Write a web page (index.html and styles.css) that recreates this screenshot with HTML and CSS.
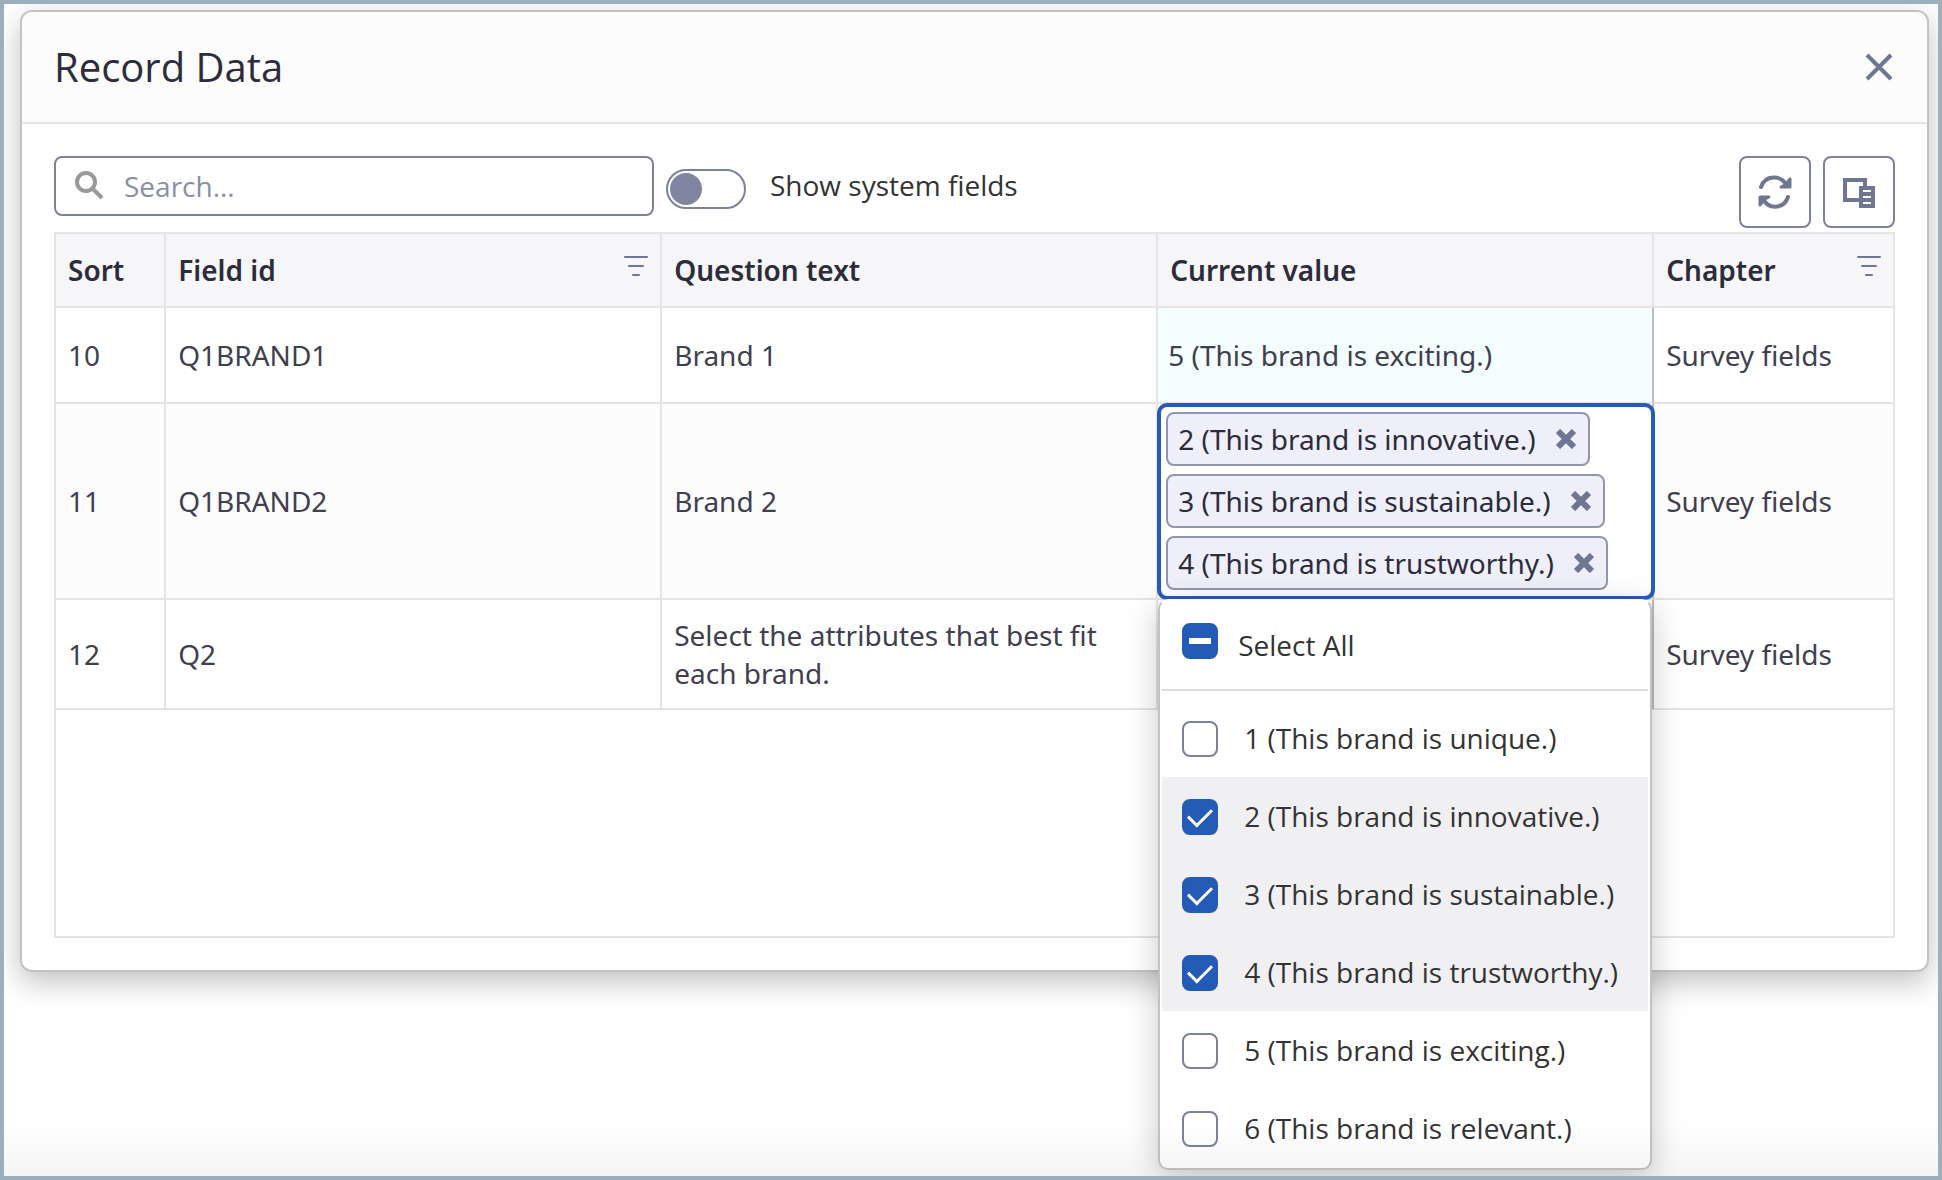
FILE: index.html
```html
<!DOCTYPE html>
<html lang="en">
<head>
  <meta charset="UTF-8">
  <meta name="viewport" content="width=device-width, initial-scale=1.0">
  <title>Record Data</title>
  <link rel="stylesheet" href="styles.css">
</head>
<body>

  <div class="dialog" role="dialog" aria-labelledby="dialogTitle">
    <!-- Header -->
    <div class="dialog-header">
      <h1 class="dialog-title" id="dialogTitle">Record Data</h1>
      <button class="close-btn" aria-label="Close">
        <svg width="28" height="28" viewBox="0 0 28 28"><path d="M2 2L26 26M26 2L2 26" stroke="#6f7691" stroke-width="4" fill="none"/></svg>
      </button>
    </div>

    <div class="dialog-body">
      <!-- Toolbar -->
      <div class="toolbar">
        <div class="search-box">
          <svg width="30" height="30" viewBox="0 0 30 30" fill="none" stroke="#999"><circle cx="12" cy="11" r="9" stroke-width="4"/><path d="M18 17L28 27" stroke-width="4"/></svg>
          <input class="search-input" type="text" placeholder="Search..." aria-label="Search">
        </div>
        <input class="toggle" type="checkbox" role="switch" id="systemFields">
        <label class="toggle-label" for="systemFields">Show system fields</label>
        <div class="toolbar-buttons">
          <button class="icon-btn" aria-label="Refresh">
            <svg width="36" height="36" viewBox="0 0 36 36" fill="none" stroke="#6f7691" stroke-width="4" stroke-linecap="round">
              <path d="M4 13C8 1 24 0 30 12"/>
              <path d="M31 23C27 35 12 36 6 25"/>
              <path d="M33 5V13H24L28 11Z" fill="#6f7691" stroke-width="3" stroke-linejoin="round"/>
              <path d="M3 31V23H12L8 25Z" fill="#6f7691" stroke-width="3" stroke-linejoin="round"/>
            </svg>
          </button>
          <button class="icon-btn" aria-label="Choose columns">
            <svg width="34" height="34" viewBox="0 0 34 34">
              <path d="M3 5H23V25H3Z" fill="none" stroke="#6f7691" stroke-width="4"/>
              <path d="M17 11H33V33H17Z" fill="#6f7691"/>
              <path d="M21 16H29M21 22H29M21 28H29" stroke="#fff" stroke-width="2"/>
            </svg>
          </button>
        </div>
      </div>

      <!-- Grid -->
      <div class="grid">
        <table class="grid-table">
          <colgroup>
            <col class="col-sort">
            <col class="col-wide">
            <col class="col-wide">
            <col class="col-wide">
            <col>
          </colgroup>
          <thead>
            <tr>
              <th>Sort</th>
              <th>
                <div class="head-cell">
                  <span>Field id</span>
                  <button class="filter-btn" aria-label="Filter Field id">
                    <svg width="24" height="22" viewBox="0 0 24 22"><path d="M1 2H23M5 11H19M9 20H15" stroke="#6f7691" stroke-width="2" stroke-linecap="round"/></svg>
                  </button>
                </div>
              </th>
              <th>Question text</th>
              <th>Current value</th>
              <th>
                <div class="head-cell">
                  <span>Chapter</span>
                  <button class="filter-btn" aria-label="Filter Chapter">
                    <svg width="24" height="22" viewBox="0 0 24 22"><path d="M1 2H23M5 11H19M9 20H15" stroke="#6f7691" stroke-width="2" stroke-linecap="round"/></svg>
                  </button>
                </div>
              </th>
            </tr>
          </thead>
          <tbody>
            <tr>
              <td>10</td>
              <td>Q1BRAND1</td>
              <td>Brand 1</td>
              <td class="value edited">5 (This brand is exciting.)</td>
              <td>Survey fields</td>
            </tr>
            <tr class="alt">
              <td>11</td>
              <td>Q1BRAND2</td>
              <td>Brand 2</td>
              <td class="value editing">
                <div class="multiselect">
                  <div class="chip">
                    <span>2 (This brand is innovative.)</span>
                    <button class="chip-remove" aria-label="Remove 2"><svg width="20" height="20" viewBox="0 0 20 20"><path d="M2 2L18 18M18 2L2 18" stroke="#6f7691" stroke-width="6"/></svg></button>
                  </div>
                  <div class="chip">
                    <span>3 (This brand is sustainable.)</span>
                    <button class="chip-remove" aria-label="Remove 3"><svg width="20" height="20" viewBox="0 0 20 20"><path d="M2 2L18 18M18 2L2 18" stroke="#6f7691" stroke-width="6"/></svg></button>
                  </div>
                  <div class="chip">
                    <span>4 (This brand is trustworthy.)</span>
                    <button class="chip-remove" aria-label="Remove 4"><svg width="20" height="20" viewBox="0 0 20 20"><path d="M2 2L18 18M18 2L2 18" stroke="#6f7691" stroke-width="6"/></svg></button>
                  </div>

                  <!-- Dropdown -->
                  <div class="dropdown">
                    <label class="select-all"><input class="check" type="checkbox" id="selectAll">Select All</label>
                    <div class="options">
                      <label class="option"><input class="check" type="checkbox">1 (This brand is unique.)</label>
                      <label class="option selected"><input class="check" type="checkbox" checked>2 (This brand is innovative.)</label>
                      <label class="option selected"><input class="check" type="checkbox" checked>3 (This brand is sustainable.)</label>
                      <label class="option selected"><input class="check" type="checkbox" checked>4 (This brand is trustworthy.)</label>
                      <label class="option"><input class="check" type="checkbox">5 (This brand is exciting.)</label>
                      <label class="option"><input class="check" type="checkbox">6 (This brand is relevant.)</label>
                    </div>
                  </div>
                </div>
              </td>
              <td>Survey fields</td>
            </tr>
            <tr>
              <td>12</td>
              <td>Q2</td>
              <td>Select the attributes that best fit each brand.</td>
              <td class="value"></td>
              <td>Survey fields</td>
            </tr>
          </tbody>
        </table>
      </div>
    </div>
  </div>

  <script>
    const selectAll = document.getElementById("selectAll");
    const options = [...document.querySelectorAll(".option .check")];

    // Sync the Select All box with the options
    function updateSelectAll() {
      const count = options.filter(o => o.checked).length;
      selectAll.checked = count === options.length;
      selectAll.indeterminate = count > 0 && count < options.length;
    }
    updateSelectAll();

    options.forEach(option => {
      option.addEventListener("change", () => {
        option.parentElement.classList.toggle("selected", option.checked);
        updateSelectAll();
      });
    });
  </script>

</body>
</html>
```
FILE: styles.css
```css
* {
  box-sizing: border-box;
}
body {
  font-family: "Open Sans", "Noto Sans", sans-serif;
  font-size: 28px;
  line-height: 38px;
  color: #333;
  background-color: #fff;
  margin: 0;
  min-height: 100vh;
  border: 4px solid #9ab1bd;
  padding: 6px 9px 0 16px;
  position: relative;
  overflow: hidden;
}
/* Fade along the bottom edge */
body::after {
  content: "";
  position: absolute;
  left: 0;
  right: 0;
  bottom: 0;
  height: 56px;
  background: linear-gradient(rgba(0, 0, 0, 0), rgba(0, 0, 0, 0.04));
  z-index: 20;
  pointer-events: none;
}
button {
  display: flex;
  align-items: center;
  justify-content: center;
  padding: 0;
  border: none;
  background: none;
  cursor: pointer;
}
input {
  font: inherit;
  margin: 0;
}
/* Dialog */
.dialog {
  border: 2px solid #c2c2c4;
  border-radius: 12px;
  background-color: #fff;
  box-shadow: 0 10px 30px rgba(0, 0, 0, 0.25);
}
.dialog-header {
  display: flex;
  align-items: center;
  justify-content: space-between;
  padding: 27px 32px;
  background-color: #fcfcfc;
  border-bottom: 2px solid #e4e4e6;
  border-radius: 10px 10px 0 0;
}
.dialog-title {
  margin: 0;
  font-size: 40px;
  line-height: 56px;
  font-weight: 400;
  color: #2c2c3a;
}
.close-btn {
  width: 32px;
  height: 32px;
}
.dialog-body {
  padding: 32px;
}
/* Toolbar */
.toolbar {
  display: flex;
  align-items: flex-start;
  margin-bottom: 4px;
}
.search-box {
  display: flex;
  align-items: center;
  gap: 20px;
  width: 600px;
  height: 60px;
  padding: 0 18px;
  border: 2px solid #7c819c;
  border-radius: 8px;
}
.search-input {
  flex: 1;
  min-width: 0;
  padding: 0;
  border: none;
  outline: none;
  background: none;
  color: #333;
}
.search-input::placeholder {
  color: #8a8ea6;
  opacity: 1;
}
.toggle {
  appearance: none;
  width: 80px;
  height: 40px;
  margin: 13px 24px 0 12px;
  padding: 2px;
  border: 2px solid #7c819c;
  border-radius: 20px;
  cursor: pointer;
}
.toggle::before {
  content: "";
  display: block;
  width: 32px;
  height: 32px;
  border-radius: 50%;
  background-color: #7f85a0;
}
.toggle:checked::before {
  margin-left: auto;
}
.toggle-label {
  padding-top: 10px;
}
.toolbar-buttons {
  display: flex;
  gap: 12px;
  margin-left: auto;
}
.icon-btn {
  width: 72px;
  height: 72px;
  border: 2px solid #7c819c;
  border-radius: 8px;
}
/* Grid */
.grid {
  min-height: 706px;
  border: 2px solid #e4e4e6;
}
.grid-table {
  width: 100%;
  font-family: "Noto Sans", "Open Sans", sans-serif;
  table-layout: fixed;
  border-collapse: separate;
  border-spacing: 0;
}
.col-sort {
  width: 6%;
}
.col-wide {
  width: 27%;
}
.grid-table th,
.grid-table td {
  padding: 16px 12px;
  text-align: left;
  border-right: 2px solid #e4e4e6;
  border-bottom: 2px solid #e4e4e6;
}
.grid-table th {
  height: 74px;
  font-weight: 600;
  color: #2c2c3a;
  background-color: #f6f6f9;
}
.grid-table td {
  height: 96px;
  color: #3f3f50;
}
.grid-table th:last-child,
.grid-table td:last-child {
  border-right: none;
}
.grid-table .alt td {
  background-color: #fcfcfc;
}
.grid-table td.value {
  border-right-color: #bcbcbe;
}
.grid-table td.edited {
  padding-left: 10px;
  background-color: #f4fdff;
}
.grid-table td.editing {
  padding: 0;
}
.head-cell {
  display: flex;
  justify-content: space-between;
}
.filter-btn {
  width: 24px;
  height: 30px;
}
/* Multiselect editor */
.multiselect {
  position: relative;
  display: flex;
  flex-direction: column;
  align-items: flex-start;
  gap: 8px;
  margin: -1px -3px -2px -1px;
  padding: 5px 5px 6px;
  border: 4px solid #265cb3;
  border-radius: 10px;
  background-color: #fff;
}
.chip {
  display: flex;
  align-items: center;
  gap: 20px;
  height: 54px;
  padding: 0 12px 0 10px;
  border: 2px solid #9196ae;
  border-radius: 8px;
  background-color: #efeffa;
  color: #2c2c3a;
}
/* Dropdown */
.dropdown {
  position: absolute;
  top: calc(100% + 3px);
  left: -3px;
  right: -1px;
  z-index: 10;
  padding: 0 2px 1px;
  font-family: "Open Sans", "Noto Sans", sans-serif;
  color: #333;
  border: 2px solid #c2c2c6;
  border-top-color: #fff;
  border-radius: 10px;
  background-color: #fff;
  box-shadow: 0 8px 32px rgba(0, 0, 0, 0.22);
}
.select-all {
  display: flex;
  align-items: center;
  gap: 20px;
  height: 90px;
  padding: 0 20px;
  border-bottom: 2px solid #dcdcde;
}
.select-all .check {
  margin-bottom: 8px;
}
.options {
  padding-top: 8px;
}
.option {
  display: flex;
  align-items: center;
  gap: 26px;
  height: 78px;
  padding: 0 20px;
}
.option.selected {
  background-color: #f0f0f3;
}
.option .check {
  margin-top: 2px;
}
.check {
  appearance: none;
  display: flex;
  align-items: center;
  justify-content: center;
  width: 36px;
  height: 36px;
  border: 2px solid #7c819c;
  border-radius: 8px;
  background-color: #fff;
}
.check:checked,
.check:indeterminate {
  border-color: #245bb7;
  background-color: #245bb7;
}
.check:checked::before {
  content: "";
  width: 11px;
  height: 20px;
  margin-bottom: 6px;
  border: solid #fff;
  border-width: 0 3px 3px 0;
  transform: rotate(45deg);
}
.check:indeterminate::before {
  content: "";
  width: 22px;
  height: 6px;
  background-color: #fff;
}
```
